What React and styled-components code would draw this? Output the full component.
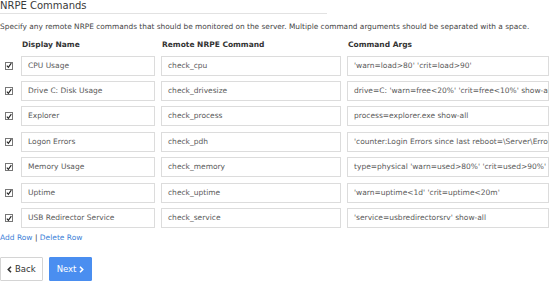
import React from "react";
import styled, { createGlobalStyle } from "styled-components";

const GlobalStyle = createGlobalStyle`
  html, body {
    margin: 0;
    padding: 0;
    background: #fff;
  }
  body {
    font-family: "DejaVu Sans", Verdana, sans-serif;
    color: #333;
  }
`;

const rows = [
  { name: "CPU Usage", cmd: "check_cpu", args: "'warn=load>80' 'crit=load>90'" },
  { name: "Drive C: Disk Usage", cmd: "check_drivesize", args: "drive=C: 'warn=free<20%' 'crit=free<10%' show-all" },
  { name: "Explorer", cmd: "check_process", args: "process=explorer.exe show-all" },
  { name: "Logon Errors", cmd: "check_pdh", args: "'counter:Login Errors since last reboot=\\Server\\Errors Logon'" },
  { name: "Memory Usage", cmd: "check_memory", args: "type=physical 'warn=used>80%' 'crit=used>90%'" },
  { name: "Uptime", cmd: "check_uptime", args: "'warn=uptime<1d' 'crit=uptime<20m'" },
  { name: "USB Redirector Service", cmd: "check_service", args: "'service=usbredirectorsrv' show-all" },
];

const Wrap = styled.div`
  width: 551px;
  overflow: hidden;
`;

const Title = styled.div`
  width: 327px;
  font-size: 10px;
  line-height: 12px;
  padding-bottom: 1px;
  color: #3a3a3a;
  border-bottom: 1px solid #e2e2e2;
`;

const Desc = styled.div`
  margin-top: 8px;
  font-size: 7.4px;
  line-height: 10px;
  color: #444;
  white-space: nowrap;
`;

const Grid = styled.div`
  display: grid;
  grid-template-columns: 21px 134px 186px 208px;
`;

const Head = styled.div`
  margin-top: 7px;
  height: 11px;
  font-size: 7.5px;
  font-weight: bold;
  line-height: 11px;
  color: #333;
  padding-left: 1px;
  margin-left: ${(p) => p.$ml || 0}px;
`;

const CheckCell = styled.div`
  display: flex;
  align-items: center;
  padding-left: 5px;
  height: 20px;
  margin-top: ${(p) => (p.$first ? 5.7 : 5.4)}px;
`;

const Box = styled.span`
  width: 8px;
  height: 8px;
  border: 1px solid #777;
  background: #fff;
  display: flex;
  align-items: center;
  justify-content: center;
  box-sizing: border-box;
`;

const Field = styled.div`
  height: 20px;
  box-sizing: border-box;
  border: 1px solid #dcdcdc;
  margin-left: ${(p) => p.$ml || 0}px;
  margin-top: ${(p) => (p.$first ? 5.7 : 5.4)}px;
  padding: 0 6px;
  font-size: 7.5px;
  line-height: 18px;
  color: #5a5a5a;
  white-space: nowrap;
  overflow: hidden;
`;

const Links = styled.div`
  margin-top: 5px;
  font-size: 7.5px;
  line-height: 10px;
  color: #444;
`;

const LinkText = styled.span`
  color: #3d7fd8;
`;

const Buttons = styled.div`
  display: flex;
  gap: 6px;
  margin-top: 14px;
`;

const Btn = styled.div`
  height: 24px;
  box-sizing: border-box;
  display: flex;
  align-items: center;
  gap: 3px;
  padding: 0 ${(p) => (p.$primary ? 7 : 6)}px;
  font-size: 8.5px;
  border: 1px solid ${(p) => (p.$primary ? "#4a8ef0" : "#d4d4d4")};
  background: ${(p) => (p.$primary ? "#4a8ef0" : "#fff")};
  color: ${(p) => (p.$primary ? "#fff" : "#333")};
  border-radius: 1px;
`;

const Check = () => (
  <Box>
    <svg width="7" height="7" viewBox="0 0 7 7">
      <path d="M1 3.6 L2.8 5.6 L6.2 0.8" stroke="#222" strokeWidth="1.3" fill="none" />
    </svg>
  </Box>
);

const Chevron = ({ left, color }) => (
  <svg width="5" height="7" viewBox="0 0 5 7">
    <path
      d={left ? "M4 0.8 L1.3 3.5 L4 6.2" : "M1 0.8 L3.7 3.5 L1 6.2"}
      stroke={color}
      strokeWidth="1.6"
      fill="none"
    />
  </svg>
);

export default function App() {
  return (
    <Wrap>
      <GlobalStyle />
      <Title>NRPE Commands</Title>
      <Desc>
        Specify any remote NRPE commands that should be monitored on the server. Multiple command arguments should be separated with a space.
      </Desc>
      <Grid>
        <div />
        <Head>Display Name</Head>
        <Head $ml={6}>Remote NRPE Command</Head>
        <Head $ml={6}>Command Args</Head>
        {rows.map((r, i) => (
          <React.Fragment key={r.name}>
            <CheckCell $first={i === 0}>
              <Check />
            </CheckCell>
            <Field $first={i === 0}>{r.name}</Field>
            <Field $first={i === 0} $ml={6}>{r.cmd}</Field>
            <Field $first={i === 0} $ml={6}>{r.args}</Field>
          </React.Fragment>
        ))}
      </Grid>
      <Links>
        <LinkText>Add Row</LinkText> | <LinkText>Delete Row</LinkText>
      </Links>
      <Buttons>
        <Btn>
          <Chevron left color="#333" />
          Back
        </Btn>
        <Btn $primary>
          Next
          <Chevron color="#fff" />
        </Btn>
      </Buttons>
    </Wrap>
  );
}
